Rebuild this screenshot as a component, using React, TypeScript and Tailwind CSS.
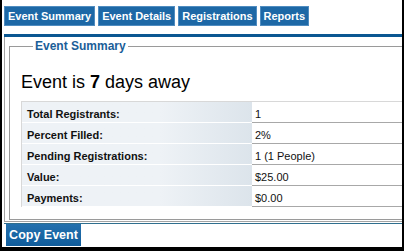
import React from "react";

const tabs = ["Event Summary", "Event Details", "Registrations", "Reports"];

const rows = [
  { label: "Total Registrants:", value: "1" },
  { label: "Percent Filled:", value: "2%" },
  { label: "Pending Registrations:", value: "1 (1 People)" },
  { label: "Value:", value: "$25.00" },
  { label: "Payments:", value: "$0.00" },
];

export default function App() {
  return (
    <div className="w-[404px] h-[251px] bg-black pl-[2px] pr-[2px] pb-[4px]">
      <div className="w-[400px] h-[247px] bg-white overflow-hidden flex flex-col font-['Liberation_Sans',Arial,sans-serif]">
        {/* tabs */}
        <div className="shrink-0 flex gap-[3px] pl-[2px] pt-[6px]">
          {tabs.map((t) => (
            <div
              key={t}
              className="h-[20px] px-[3px] flex items-center bg-[#1d68a6] border border-[#4f8cc0] text-white text-[11px] font-bold leading-[14px]"
            >
              {t}
            </div>
          ))}
        </div>
        <div className="shrink-0 ml-[2px] mt-[8px] h-[3px] w-[420px] bg-[#0a5792]" />

        {/* panel */}
        <div className="shrink-0 ml-[2px] w-[430px] border-l border-b border-[#a3a3a3] pl-[4px] pb-[1px]">
          <fieldset className="mt-[2px] border border-[#9a9a9a] pl-[11px] pb-[12px]">
            <legend className="ml-[12px] px-[2px] text-[12px] leading-[14px] font-bold text-[#1b5e98]">
              Event Summary
            </legend>
            <div className="mt-[19px] text-[18px] leading-[21px] text-black">
              Event is <span className="font-bold">7</span> days away
            </div>
            <div className="mt-[8px] border-t border-l border-[#d8d8d8]">
              {rows.map((r) => (
                <div key={r.label} className="flex h-[21px]">
                  <div className="w-[230px] pl-[5px] pt-[5px] pb-[1px] border-b border-white bg-gradient-to-r from-[#eef2f6] from-60% to-[#dce4eb] text-[11px] leading-[14px] font-bold text-[#111]">
                    {r.label}
                  </div>
                  <div className="flex-1 pl-[3px] pt-[5px] pb-[1px] border-b border-[#a8a8a8] bg-white text-[11px] leading-[14px] text-[#111]">
                    {r.value}
                  </div>
                </div>
              ))}
            </div>
          </fieldset>
        </div>

        {/* bottom bar */}
        <div className="shrink-0 ml-[2px] mt-[1px] w-[420px] border-t border-[#2f6f8e] pl-[2px]">
          <div className="w-[75px] h-[22px] flex items-center justify-center bg-gradient-to-b from-[#2471ae] to-[#0f5c9b] text-white text-[12.5px] font-bold leading-[14px]">
            Copy Event
          </div>
        </div>
      </div>
    </div>
  );
}
